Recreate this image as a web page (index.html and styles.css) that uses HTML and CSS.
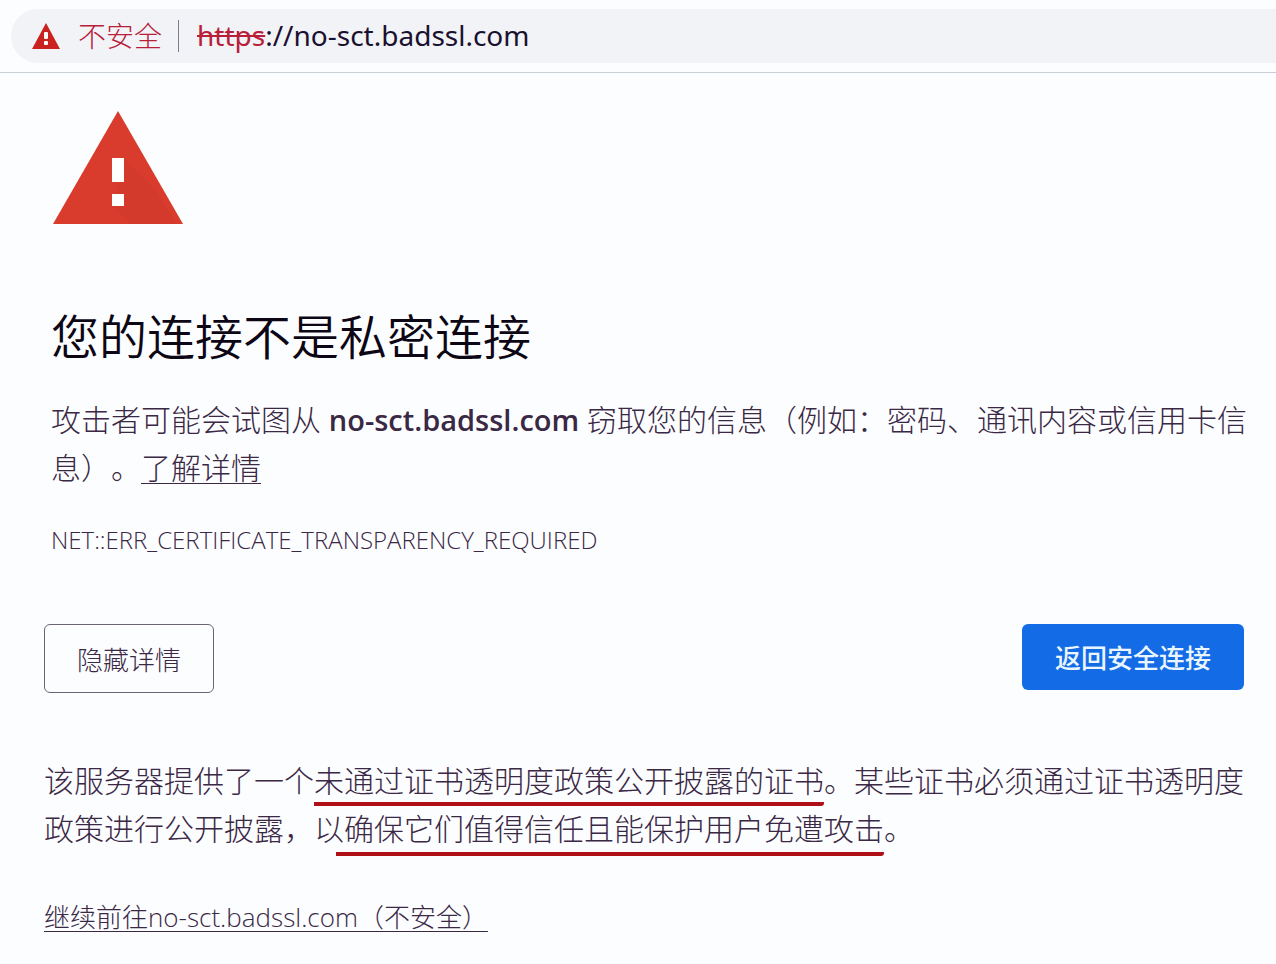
FILE: index.html
```html
<!DOCTYPE html>
<html lang="zh-CN">
<head>
    <meta charset="UTF-8">
    <meta name="viewport" content="width=device-width, initial-scale=1.0">
    <title>隐私设置错误</title>
    <link rel="stylesheet" href="styles.css">
</head>
<body>
    <header class="toolbar">
        <div class="address-bar">
            <svg class="warning-icon" viewBox="0 0 28 26" aria-hidden="true">
                <path d="M14 0L28 26H0z" fill="#c9221f"/>
                <rect x="12" y="9" width="4" height="7" rx="1" fill="#fff"/>
                <rect x="12" y="18" width="4" height="4" rx="1" fill="#fff"/>
            </svg>
            <span class="security-label">不安全</span>
            <span class="url"><s>https</s>://no-sct.badssl.com</span>
        </div>
    </header>

    <main class="interstitial">
        <svg class="icon" viewBox="0 0 130 113" aria-hidden="true">
            <path d="M65 0L130 113H0z" fill="#d93c2c"/>
            <path d="M71 47L104 80 123 113H77L59 96z" fill="#c9382b" opacity="0.3"/>
            <path d="M59 47h12v24H59zM59 83h12v12H59z" fill="#fff"/>
        </svg>

        <h1>您的连接不是私密连接</h1>
        <p class="message">攻击者可能会试图从 <strong>no-sct.badssl.com</strong> 窃取您的信息（例如：密码、通讯内容或信用卡信息）。<a href="#">了解详情</a></p>
        <p class="error-code">NET::ERR_CERTIFICATE_TRANSPARENCY_REQUIRED</p>

        <div class="nav-buttons">
            <button type="button" class="btn btn-details">隐藏详情</button>
            <button type="button" class="btn btn-primary">返回安全连接</button>
        </div>

        <div class="details">
            <p>该服务器提供了一个<span class="marked">未通过证书透明度政策公开披露的证书</span>。某些证书必须通过证书透明度政策进行公开披露，以<span class="marked marked-wide">确保它们值得信任且能保护用户免遭攻击</span>。</p>
            <a href="#" class="proceed">继续前往no-sct.badssl.com（不安全）</a>
        </div>
    </main>
</body>
</html>
```

FILE: styles.css
```css
:root {
    --text-color: #3a2845;
    --danger-color: #b8203a;
    --mark-color: #b01018;
    --primary-color: #146be6;
}

* {
    margin: 0;
    padding: 0;
    box-sizing: border-box;
}

body {
    background-color: #fcfdff;
    color: var(--text-color);
    font-family: "Open Sans", "Noto Sans CJK SC", sans-serif;
    font-weight: 300;
    font-size: 30px;
    line-height: 48px;
    text-spacing-trim: space-all;
}

a {
    color: inherit;
    text-decoration-thickness: 1px;
    text-underline-offset: 4px;
}

.toolbar {
    padding: 9px 0 9px 11px;
    border-bottom: 1px solid #c9cfd6;
}

.address-bar {
    display: flex;
    align-items: center;
    height: 54px;
    padding-left: 21px;
    background-color: #f1f3f6;
    border-radius: 27px 0 0 27px;
    font-size: 28px;
}

.warning-icon {
    width: 28px;
    height: 26px;
    margin-right: 18px;
}

.security-label {
    padding-right: 16px;
    border-right: 1px solid #777f8c;
    line-height: 32px;
    color: var(--danger-color);
}

.url {
    margin-left: 18px;
    padding-bottom: 2px;
    font-family: "Noto Sans", sans-serif;
    font-weight: 400;
    color: #1a1030;
}

.url s {
    color: var(--danger-color);
    text-decoration-thickness: 2px;
}

.interstitial {
    padding: 38px 32px 32px 44px;
}

.icon {
    display: block;
    width: 130px;
    height: 113px;
    margin-left: 9px;
}

h1 {
    margin: 79px 0 25px 7px;
    font-size: 48px;
    font-weight: 350;
    line-height: 68px;
    color: #0d0614;
}

.message {
    margin: 0 -16px 0 7px;
}

.message strong {
    font-size: 29px;
    font-weight: 600;
}

.error-code {
    margin: 24px 0 0 7px;
    font-size: 24px;
}

.nav-buttons {
    display: flex;
    justify-content: space-between;
    align-items: flex-start;
    margin-top: 60px;
}

.btn {
    height: 66px;
    padding: 0 33px;
    border-radius: 6px;
    font-family: inherit;
    font-size: 26px;
    cursor: pointer;
}

.btn-details {
    height: 69px;
    padding: 0 32px;
    border: 1px solid #6b6475;
    background-color: transparent;
    color: var(--text-color);
    font-weight: 300;
}

.btn-primary {
    border: none;
    background-color: var(--primary-color);
    color: #eaf6ff;
    font-weight: 500;
}

.details {
    margin-top: 64px;
}

.marked {
    padding-bottom: 1px;
    border-bottom: 4px solid var(--mark-color);
    border-bottom-right-radius: 3px;
}

/* this mark starts a little before its first character */
.marked-wide {
    margin-left: -8px;
    padding-left: 8px;
    padding-bottom: 3px;
}

.proceed {
    display: inline-block;
    margin-top: 40px;
    font-size: 26px;
}
```
